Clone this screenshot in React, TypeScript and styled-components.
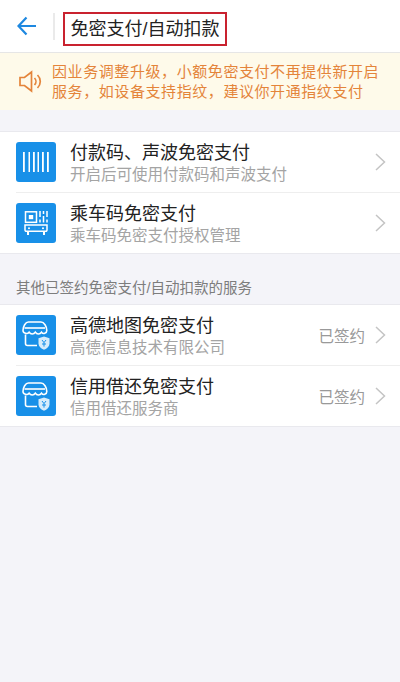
import React from "react";
import styled, { createGlobalStyle } from "styled-components";

const GlobalStyle = createGlobalStyle`
  html, body {
    margin: 0;
    padding: 0;
    background: #f4f4f9;
    font-family: "Liberation Sans", "Noto Sans CJK SC", sans-serif;
  }
`;

const Page = styled.div`
  width: 400px;
  height: 682px;
  overflow: hidden;
  display: flex;
  flex-direction: column;
  background: #f4f4f9;
`;

const Header = styled.header`
  height: 53px;
  flex-shrink: 0;
  display: flex;
  align-items: center;
  background: #fff;
  border-bottom: 1px solid #e6e6e6;
  box-sizing: border-box;
  padding-left: 17px;
`;

const BackIcon = styled.svg`
  width: 20px;
  height: 20px;
  flex-shrink: 0;
`;

const HeaderDivider = styled.div`
  width: 2px;
  height: 27px;
  margin: 0 8px 0 16px;
  background: #eaeaea;
`;

const Title = styled.h1`
  margin: 6px 0 0;
  width: 164px;
  height: 34px;
  box-sizing: border-box;
  border: 2px solid #c9222f;
  padding-bottom: 4px;
  display: flex;
  align-items: center;
  justify-content: center;
  font-size: 18px;
  font-weight: 400;
  color: #222;
  white-space: nowrap;
`;

const Notice = styled.div`
  height: 57px;
  flex-shrink: 0;
  display: flex;
  align-items: center;
  background: #fefaea;
  padding-left: 19px;
  box-sizing: border-box;
`;

const NoticeIcon = styled.svg`
  width: 23px;
  height: 23px;
  flex-shrink: 0;
  margin-right: 10px;
`;

const NoticeText = styled.p`
  margin: 0;
  font-size: 15px;
  line-height: 20px;
  letter-spacing: 0.58px;
  color: #e4843a;
  white-space: nowrap;
`;

const List = styled.section<{ $top: number }>`
  margin-top: ${(p) => p.$top}px;
  background: #fff;
  border-top: 1px solid #e9e9ee;
  border-bottom: 1px solid #e9e9ee;
`;

const Row = styled.div<{ $last?: boolean }>`
  height: 60px;
  margin-left: 16px;
  padding-right: 14px;
  display: flex;
  align-items: center;
  border-bottom: ${(p) => (p.$last ? "none" : "1px solid #eeeeee")};
`;

const IconBox = styled.div`
  width: 40px;
  height: 40px;
  border-radius: 3px;
  background: #1890e8;
  flex-shrink: 0;
  display: flex;
  align-items: center;
  justify-content: center;
  margin-right: 14px;
`;

const RowText = styled.div`
  flex: 1;
  min-width: 0;
  padding-top: 2px;
`;

const RowTitle = styled.div`
  font-size: 18px;
  line-height: 24px;
  color: #222;
  white-space: nowrap;
`;

const RowSub = styled.div`
  font-size: 15.5px;
  line-height: 20px;
  color: #a4a4a4;
  white-space: nowrap;
`;

const Status = styled.span`
  font-size: 15.5px;
  color: #999;
  margin-right: 10px;
`;

const Chevron = styled.svg`
  width: 11px;
  height: 18px;
  flex-shrink: 0;
`;

const SectionLabel = styled.div`
  height: 35px;
  margin-top: 15px;
  padding-left: 16px;
  display: flex;
  align-items: center;
  font-size: 14.5px;
  color: #7d7d7d;
`;

const ChevronIcon = () => (
  <Chevron viewBox="0 0 11 18" fill="none">
    <path d="M1 1l8.500 8L1 17" stroke="#c4c4c4" strokeWidth="1.500" />
  </Chevron>
);

const BarcodeIcon = () => (
  <svg width="28" height="20" viewBox="0 0 28 20" fill="#fff">
    <rect x="1" y="0" width="1.800" height="20" />
    <rect x="6.500" y="0" width="1.500" height="20" />
    <rect x="11" y="0" width="1.800" height="20" />
    <rect x="15.500" y="0" width="1.500" height="20" />
    <rect x="20" y="0" width="1.800" height="20" />
    <rect x="25" y="0" width="1.800" height="20" />
  </svg>
);

const TransitIcon = () => (
  <svg width="24" height="24" viewBox="0 0 24 24" fill="none" stroke="#fff" strokeWidth="1.500">
    <rect x="1.500" y="0.800" width="11" height="10.500" />
    <rect x="4.800" y="4" width="4.400" height="4.200" fill="#fff" stroke="none" />
    <path d="M16 0v6M19.500 0v3M23 0v6M16 8.500v3M19.500 5v6.500M23 8.500v3" />
    <path d="M1 14h22v5a1.200 1.200 0 0 1-1.200 1.200H2.200A1.200 1.200 0 0 1 1 19z" />
    <path d="M4 20.500V24M20 20.500V24" strokeWidth="2" />
    <circle cx="5" cy="17.200" r="1" fill="#fff" stroke="none" />
    <circle cx="19" cy="17.200" r="1" fill="#fff" stroke="none" />
  </svg>
);

const ShopIcon = () => (
  <svg width="28" height="29" viewBox="0 0 28 29" fill="none" stroke="#fff" strokeWidth="1.600">
    <path d="M6.500 1h12.500c3 0 5.800 4.500 5.800 8.500 0 3-3.600 4-5.300 1.700-1.500 2.400-4.700 2.400-6.200 0-1.500 2.400-4.700 2.400-6.200 0C5.400 13.500 1 12.500 1 9.500 1 5.500 3.500 1 6.500 1z" />
    <path d="M2.500 7h20.500" />
    <path d="M3.500 13.500v9a2 2 0 0 0 2 2h9.500" />
    <path d="M22 15.500l5.500 1.800v5.200c0 3-2.500 5-5.500 6.200-3-1.200-5.500-3.200-5.500-6.200v-5.200z" fill="#d6ecfb" stroke="none" />
    <path d="M20 19l2 2.600 2-2.600M22 21.600v4M20 23h4" stroke="#1890e8" strokeWidth="1" />
  </svg>
);

const rows = [
  { title: "高德地图免密支付", sub: "高德信息技术有限公司" },
  { title: "信用借还免密支付", sub: "信用借还服务商" },
];

export default function App() {
  return (
    <Page>
      <GlobalStyle />
      <Header>
        <BackIcon viewBox="0 0 20 20" fill="none" stroke="#1e88e0" strokeWidth="2.200">
          <path d="M1.500 10H19M9.500 1.500L1.500 10l8 8.500" />
        </BackIcon>
        <HeaderDivider />
        <Title>免密支付/自动扣款</Title>
      </Header>
      <Notice>
        <NoticeIcon viewBox="0 0 23 23" fill="none" stroke="#e4843a" strokeWidth="1.700">
          <path d="M1 7.500h4.500L12.500 2v19l-7-5.500H1z" />
          <path d="M15.500 8a5 5 0 0 1 0 7M18.500 5a9 9 0 0 1 0 13" />
        </NoticeIcon>
        <NoticeText>
          因业务调整升级，小额免密支付不再提供新开启
          <br />
          服务，如设备支持指纹，建议你开通指纹支付
        </NoticeText>
      </Notice>
      <List $top={21}>
        <Row>
          <IconBox>
            <BarcodeIcon />
          </IconBox>
          <RowText>
            <RowTitle>付款码、声波免密支付</RowTitle>
            <RowSub>开启后可使用付款码和声波支付</RowSub>
          </RowText>
          <ChevronIcon />
        </Row>
        <Row $last>
          <IconBox>
            <TransitIcon />
          </IconBox>
          <RowText>
            <RowTitle>乘车码免密支付</RowTitle>
            <RowSub>乘车码免密支付授权管理</RowSub>
          </RowText>
          <ChevronIcon />
        </Row>
      </List>
      <SectionLabel>其他已签约免密支付/自动扣款的服务</SectionLabel>
      <List $top={0}>
        {rows.map((row, i) => (
          <Row key={row.title} $last={i === rows.length - 1}>
            <IconBox>
              <ShopIcon />
            </IconBox>
            <RowText>
              <RowTitle>{row.title}</RowTitle>
              <RowSub>{row.sub}</RowSub>
            </RowText>
            <Status>已签约</Status>
            <ChevronIcon />
          </Row>
        ))}
      </List>
    </Page>
  );
}
